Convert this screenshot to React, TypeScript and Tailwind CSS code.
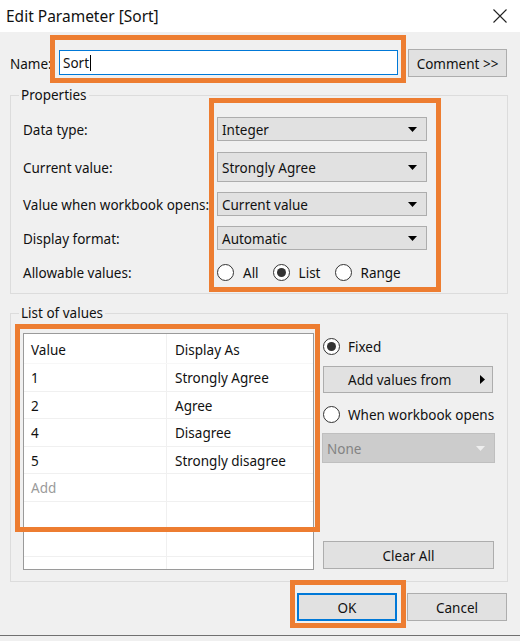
import React from "react";

const ORANGE = "border-[5px] border-[#ed7d31]";

function Caret({ color = "#000" }: { color?: string }) {
  return (
    <svg width="9" height="5" viewBox="0 0 9 5">
      <path d="M0 0 H9 L4.5 5 Z" fill={color} />
    </svg>
  );
}

function Dropdown({ value, tall }: { value: string; tall?: boolean }) {
  return (
    <div
      className={`flex w-[210px] items-center justify-between border border-[#adadad] bg-[#e1e1e1] pl-[4px] pr-[9px] ${
        tall ? "h-[30px]" : "h-[24px]"
      }`}
    >
      <span className="pt-[2px]">{value}</span>
      <Caret />
    </div>
  );
}

function Radio({ checked }: { checked?: boolean }) {
  return (
    <div className="flex size-[17px] shrink-0 items-center justify-center rounded-full border border-[#333] bg-white">
      {checked && <div className="size-[9px] rounded-full bg-[#333]" />}
    </div>
  );
}

function Group({
  title,
  className,
  children,
}: {
  title: string;
  className: string;
  children: React.ReactNode;
}) {
  return (
    <div className={`relative w-[498px] border border-[#dcdcdc] ${className}`}>
      <span className="absolute left-[8px] top-[-10px] bg-[#f0f0f0] px-[2px] leading-[18px]">
        {title}
      </span>
      {children}
    </div>
  );
}

const rows: [string, string][] = [
  ["1", "Strongly Agree"],
  ["2", "Agree"],
  ["4", "Disagree"],
  ["5", "Strongly disagree"],
];

export default function App() {
  return (
    <div className="relative h-[641px] w-[520px] overflow-hidden bg-[#f0f0f0] font-['Noto_Sans',sans-serif] text-[13.5px] text-[#111]">
      {/* title bar */}
      <div className="flex h-[32px] items-center justify-between bg-white pl-[6px] pr-[13px]">
        <span className="pt-[1px] text-[15.5px]">Edit Parameter [Sort]</span>
        <svg width="14" height="14" viewBox="0 0 14 14">
          <path d="M0.5 0.5 L13.5 13.5 M13.5 0.5 L0.5 13.5" stroke="#222" strokeWidth="1.1" />
        </svg>
      </div>

      <div className="pl-[10px] pr-[12px]">
        {/* name row */}
        <div className="mt-[3px] flex h-[48px] items-start">
          <span className="mt-[20px] w-[40px] leading-[18px]">Name:</span>
          <div className="ml-[9px] mt-[15px] flex h-[25px] w-[339px] items-center border border-[#0078d7] bg-white pl-[3px]">
            <span className="pt-[1px]">Sort</span>
            <span className="ml-px h-[16px] w-px bg-black" />
          </div>
          <div className="ml-[10px] mt-[14px] flex h-[28px] w-[99px] items-center justify-center border border-[#adadad] bg-[#e1e1e1] pt-[2px]">
            Comment &gt;&gt;
          </div>
        </div>

        {/* properties */}
        <Group title="Properties" className="mt-[12px] h-[199px] pl-[12px] pt-[21px]">
          {[
            ["Data type:", "Integer", false, "mt-0"],
            ["Current value:", "Strongly Agree", true, "mt-[11px]"],
            ["Value when workbook opens:", "Current value", false, "mt-[10px]"],
            ["Display format:", "Automatic", false, "mt-[10px]"],
          ].map(([label, value, tall, mt]) => (
            <div key={label as string} className={`flex items-center ${mt}`}>
              <span className="w-[194px] pt-[2px]">{label as string}</span>
              <Dropdown value={value as string} tall={tall as boolean} />
            </div>
          ))}
          <div className="mt-[13px] flex h-[18px] items-center">
            <span className="w-[194px] pt-[2px]">Allowable values:</span>
            <div className="flex items-center gap-[14px]">
              <div className="flex items-center gap-[9px]">
                <Radio />
                <span className="pt-[2px]">All</span>
              </div>
              <div className="flex items-center gap-[9px]">
                <Radio checked />
                <span className="pt-[2px]">List</span>
              </div>
              <div className="flex items-center gap-[9px]">
                <Radio />
                <span className="pt-[2px]">Range</span>
              </div>
            </div>
          </div>
        </Group>

        {/* list of values */}
        <Group title="List of values" className="mt-[19px] flex h-[269px] pl-[12px] pt-[19px]">
          <div className="h-[237px] w-[291px] shrink-0 overflow-hidden border border-[#9a9a9a] bg-white">
            <div className="grid h-[30px] grid-cols-[143px_1fr] border-b border-[#f7f7f7]">
              <div className="flex items-center border-r border-[#f0f0f0] pl-[7px] pt-[4px]">Value</div>
              <div className="flex items-center pl-[8px] pt-[4px]">Display As</div>
            </div>
            {rows.map(([v, d]) => (
              <div key={v} className="grid h-[27.5px] grid-cols-[143px_1fr] border-b border-[#f0f0f0]">
                <div className="flex items-center border-r border-[#f0f0f0] pl-[7px] pt-[2px]">{v}</div>
                <div className="flex items-center pl-[8px] pt-[2px]">{d}</div>
              </div>
            ))}
            <div className="grid h-[27.5px] grid-cols-[143px_1fr] border-b border-[#f0f0f0]">
              <div className="flex items-center border-r border-[#f0f0f0] pl-[7px] pt-[2px] text-[#9a9a9a]">Add</div>
              <div />
            </div>
            {[0, 1, 2].map((i) => (
              <div key={i} className="grid h-[27.5px] grid-cols-[143px_1fr] border-b border-[#f0f0f0]">
                <div className="border-r border-[#f0f0f0]" />
                <div />
              </div>
            ))}
          </div>

          <div className="ml-[9px] flex flex-col">
            <div className="mt-[4px] flex h-[18px] items-center gap-[8px]">
              <Radio checked />
              <span className="pt-[2px]">Fixed</span>
            </div>
            <div className="mt-[11px] flex h-[27px] w-[170px] items-center justify-between border border-[#adadad] bg-[#e1e1e1] pl-[24px] pr-[7px]">
              <span className="pt-[2px]">Add values from</span>
              <svg width="5" height="9" viewBox="0 0 5 9">
                <path d="M0 0 L5 4.5 L0 9 Z" fill="#000" />
              </svg>
            </div>
            <div className="mt-[12px] flex h-[18px] items-center gap-[8px]">
              <Radio />
              <span className="whitespace-nowrap pt-[2px]">When workbook opens</span>
            </div>
            <div className="-ml-px mt-[10px] flex h-[30px] w-[173px] items-center justify-between border border-[#bfbfbf] bg-[#cccccc] pl-[4px] pr-[9px] text-[#838383]">
              <span className="pt-[2px]">None</span>
              <Caret color="#eeeeee" />
            </div>
            <div className="mt-[78px] flex h-[28px] w-[171px] items-center justify-center border border-[#adadad] bg-[#e1e1e1] pt-[2px]">
              Clear All
            </div>
          </div>
        </Group>

        {/* buttons */}
        <div className="mt-[11px] flex justify-end gap-[10px] pr-px">
          <div className="flex h-[28px] w-[100px] items-center justify-center border-2 border-[#0078d7] bg-[#e1e1e1] pt-[2px]">
            OK
          </div>
          <div className="flex h-[28px] w-[100px] items-center justify-center border border-[#adadad] bg-[#e1e1e1] pt-[2px]">
            Cancel
          </div>
        </div>
      </div>
      <div className="mt-[14px] h-px bg-[#707070]" />

      {/* annotation boxes */}
      <div className={`pointer-events-none absolute left-[50px] top-[35px] h-[48px] w-[356px] ${ORANGE}`} />
      <div className={`pointer-events-none absolute left-[209px] top-[98px] h-[194px] w-[232px] ${ORANGE}`} />
      <div className={`pointer-events-none absolute left-[15px] top-[324px] h-[208px] w-[305px] ${ORANGE}`} />
      <div className={`pointer-events-none absolute left-[290px] top-[580px] h-[48px] w-[116px] ${ORANGE}`} />
    </div>
  );
}
